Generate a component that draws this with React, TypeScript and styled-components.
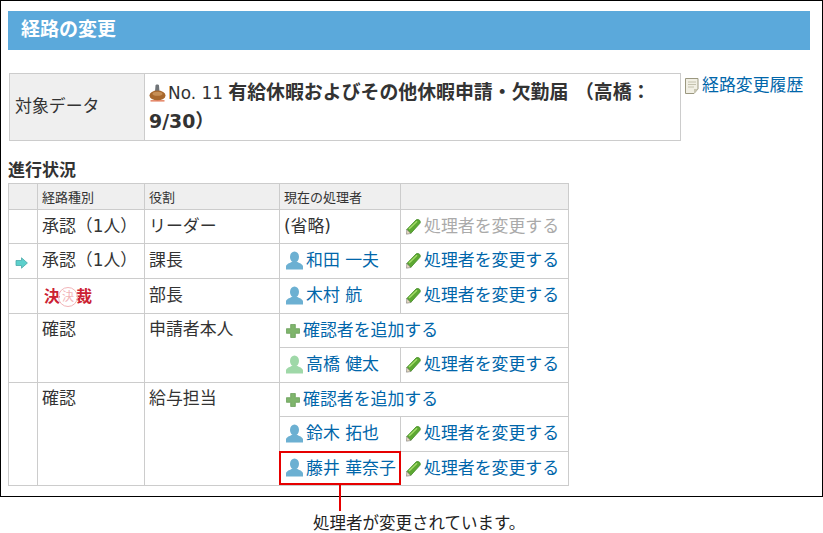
import React from "react";
import styled, { createGlobalStyle } from "styled-components";

const Global = createGlobalStyle`
  html, body { margin: 0; padding: 0; background: #fff; }
  body {
    font-family: "DejaVu Sans", "Noto Sans CJK JP", sans-serif;
    font-size: 16.9px;
    color: #333;
  }
`;

const Frame = styled.div`
  box-sizing: border-box;
  width: 823px;
  height: 497px;
  border: 1px solid #000;
  padding: 10px 12px 0 7px;
`;

const TitleBar = styled.h1`
  margin: 0;
  height: 39px;
  line-height: 36px;
  padding-left: 13px;
  background: #5ba9db;
  color: #fff;
  font-size: 19px;
  font-weight: bold;
`;

const TargetRow = styled.div`
  display: flex;
  margin: 23px 0 0 1px;
`;

const TargetTable = styled.table`
  width: 672px;
  height: 68px;
  border-collapse: collapse;
  td, th { border: 1px solid #ccc; }
`;

const TargetHead = styled.th`
  width: 135px;
  box-sizing: border-box;
  padding: 0 5px 5px;
  background: #efefef;
  font-weight: normal;
  text-align: left;
`;

const TargetBody = styled.td`
  padding: 0 4px;
  line-height: 28px;
`;

const Subject = styled.strong`
  font-size: 18.9px;
  font-weight: bold;
`;

const HistoryLink = styled.a`
  display: flex;
  align-items: flex-start;
  margin: 0 0 0 4px;
  line-height: 24px;
  height: 24px;
  white-space: nowrap;
  color: #0066aa;
`;

const SectionTitle = styled.h2`
  margin: 19px 0 0 0;
  height: 23px;
  line-height: 21px;
  font-size: 17px;
  font-weight: bold;
`;

const RouteTable = styled.table`
  border-collapse: collapse;
  table-layout: fixed;
  width: 560px;
  th, td { border: 1px solid #ccc; }
`;

const Row = styled.tr<{ $h: number }>`
  height: ${(p) => p.$h}px;
`;

const HeadCell = styled.th`
  padding: 0 4px 1px;
  background: #efefef;
  font-size: 13px;
  font-weight: normal;
  text-align: left;
`;

const Cell = styled.td<{ $top?: boolean }>`
  padding: ${(p) => (p.$top ? "3px 4px 0" : "0 4px 2px")};
  line-height: 24px;
  vertical-align: ${(p) => (p.$top ? "top" : "middle")};
  white-space: nowrap;
`;

const MarkerCell = styled(Cell)`
  padding: 4px 0 0 6px;
`;

const ActionLink = styled.a<{ $off?: boolean }>`
  display: inline-flex;
  align-items: center;
  vertical-align: top;
  color: ${(p) => (p.$off ? "#aaa" : "#0066aa")};
`;

const ChangedCell = styled(Cell)`
  position: relative;
  &::before {
    content: "";
    position: absolute;
    inset: -1px -1px 0 -1px;
    border: 2px solid #e60000;
    pointer-events: none;
  }
  &::after {
    content: "";
    position: absolute;
    left: 59px;
    top: 33px;
    width: 2px;
    height: 26px;
    background: #e60000;
  }
`;

const Stamp = styled.span`
  display: flex;
  justify-content: space-between;
  width: 48px;
  margin: 3px 0 0 2px;
  line-height: 20px;
  color: #cc2233;
  font-size: 16px;
  font-weight: bold;
`;

const StampSeal = styled.span`
  position: relative;
  width: 12px;
  color: #f2b4b8;
  font-size: 12px;
  font-weight: normal;
  text-align: center;
  &::before {
    content: "";
    position: absolute;
    left: -4px;
    top: 0;
    width: 18px;
    height: 18px;
    border: 1px solid #f2b4b8;
    border-radius: 50%;
  }
`;

const Caption = styled.p`
  margin: 17px 0 0 313px;
  font-size: 16.5px;
  line-height: 20px;
  color: #222;
`;

const PersonIcon = ({ color = "#6cb0d2" }: { color?: string }) => (
  <svg width="17" height="19" viewBox="0 0 17 19" style={{ margin: "0 3px 0 2px", flex: "none" }}>
    <ellipse cx="8.500" cy="6" rx="4.500" ry="5.500" fill={color} />
    <path d="M0 18.500v-3c0-2.200 3.500-3.300 5.500-4.500h6c2 1.200 5.500 2.300 5.500 4.500v3z" fill={color} />
  </svg>
);

const PencilIcon = () => (
  <svg width="15" height="16" viewBox="0 0 15 16" style={{ margin: "2px 3px 0 1px", flex: "none" }}>
    <path d="M.8 10.500 10 1c1-.8 2.800-.6 3.700.4.800 1 .8 2.400 0 3.200L4.700 14.500z" fill="#5da832" stroke="#3f8a22" strokeWidth="0.8" />
    <path d="M3 10 11 2.200" stroke="#a5dc6a" strokeWidth="1.400" />
    <path d="M.8 10.500 .5 15.200 4.700 14.500z" fill="#e8dcc0" stroke="#777" strokeWidth="0.6" />
  </svg>
);

const PlusIcon = () => (
  <svg width="14" height="14" viewBox="0 0 15 15" style={{ margin: "3px 3px 0 2px", flex: "none" }}>
    <path d="M5 .5h5v4.500h4.500v5H10v4.500H5V10H.5V5H5z" fill="#7fb56c" stroke="#659c54" strokeWidth="0.8" />
  </svg>
);

const ArrowIcon = () => (
  <svg width="13" height="12" viewBox="0 0 13 12">
    <path d="M1 3.500h5.500V.8L12.400 6 6.500 11.200V8.500H1z" fill="#5cd0cc" stroke="#4aa8a8" strokeWidth="0.8" />
  </svg>
);

const SealIcon = () => (
  <svg width="17" height="18" viewBox="0 0 17 18" style={{ margin: "0 2px -3px 0", flex: "none" }}>
    <path d="M6.500 1.500c0-1.300 3.500-1.300 3.500 0l.5 6h-4.500z" fill="#6f7478" />
    <ellipse cx="8.500" cy="11.500" rx="8" ry="5" fill="#a8682c" />
    <ellipse cx="8.500" cy="9.800" rx="5" ry="2" fill="#c68f55" />
    <rect x="1.500" y="16.200" width="14" height="1.300" fill="#e0704c" />
  </svg>
);

const DocIcon = () => (
  <svg width="14" height="16" viewBox="0 0 14 16" style={{ marginRight: 3, marginTop: 5, flex: "none" }}>
    <path d="M.5.500h12.500v10.500L9 15.500H.5z" fill="#f1efe4" stroke="#9b9880" />
    <path d="M3 4h8M3 6.500h8M3 9h6" stroke="#c4c2ae" />
    <path d="M9 15.500V11h4z" fill="#c9c6b2" />
  </svg>
);

const Change = ({ off }: { off?: boolean }) => (
  <ActionLink $off={off}>
    <PencilIcon />
    処理者を変更する
  </ActionLink>
);

const Person = ({ name, color }: { name: string; color?: string }) => (
  <ActionLink>
    <PersonIcon color={color} />
    {name}
  </ActionLink>
);

const Add = () => (
  <ActionLink>
    <PlusIcon />
    確認者を追加する
  </ActionLink>
);

export default function App() {
  return (
    <>
      <Global />
      <Frame>
        <TitleBar>経路の変更</TitleBar>
        <TargetRow>
          <TargetTable>
            <tbody>
              <tr>
                <TargetHead>対象データ</TargetHead>
                <TargetBody>
                  <SealIcon />
                  No. 11 <Subject>有給休暇およびその他休暇申請・欠勤届 （高橋： 9/30）</Subject>
                </TargetBody>
              </tr>
            </tbody>
          </TargetTable>
          <HistoryLink>
            <DocIcon />
            経路変更履歴
          </HistoryLink>
        </TargetRow>
        <SectionTitle>進行状況</SectionTitle>
        <RouteTable>
          <colgroup>
            <col style={{ width: 29 }} />
            <col style={{ width: 107 }} />
            <col style={{ width: 135 }} />
            <col style={{ width: 121 }} />
            <col style={{ width: 168 }} />
          </colgroup>
          <thead>
            <Row $h={26}>
              <HeadCell />
              <HeadCell>経路種別</HeadCell>
              <HeadCell>役割</HeadCell>
              <HeadCell>現在の処理者</HeadCell>
              <HeadCell />
            </Row>
          </thead>
          <tbody>
            <Row $h={34}>
              <Cell />
              <Cell>承認（1人）</Cell>
              <Cell>リーダー</Cell>
              <Cell>(省略)</Cell>
              <Cell><Change off /></Cell>
            </Row>
            <Row $h={35}>
              <MarkerCell><ArrowIcon /></MarkerCell>
              <Cell>承認（1人）</Cell>
              <Cell>課長</Cell>
              <Cell><Person name="和田 一夫" /></Cell>
              <Cell><Change /></Cell>
            </Row>
            <Row $h={35}>
              <Cell />
              <Cell><Stamp>決<StampSeal>決</StampSeal>裁</Stamp></Cell>
              <Cell>部長</Cell>
              <Cell><Person name="木村 航" /></Cell>
              <Cell><Change /></Cell>
            </Row>
            <Row $h={34}>
              <Cell rowSpan={2} />
              <Cell rowSpan={2} $top>確認</Cell>
              <Cell rowSpan={2} $top>申請者本人</Cell>
              <Cell colSpan={2}><Add /></Cell>
            </Row>
            <Row $h={35}>
              <Cell><Person name="高橋 健太" color="#9fd8a8" /></Cell>
              <Cell><Change /></Cell>
            </Row>
            <Row $h={34}>
              <Cell rowSpan={3} />
              <Cell rowSpan={3} $top>確認</Cell>
              <Cell rowSpan={3} $top>給与担当</Cell>
              <Cell colSpan={2}><Add /></Cell>
            </Row>
            <Row $h={35}>
              <Cell><Person name="鈴木 拓也" /></Cell>
              <Cell><Change /></Cell>
            </Row>
            <Row $h={34}>
              <ChangedCell><Person name="藤井 華奈子" /></ChangedCell>
              <Cell><Change /></Cell>
            </Row>
          </tbody>
        </RouteTable>
      </Frame>
      <Caption>処理者が変更されています。</Caption>
    </>
  );
}
